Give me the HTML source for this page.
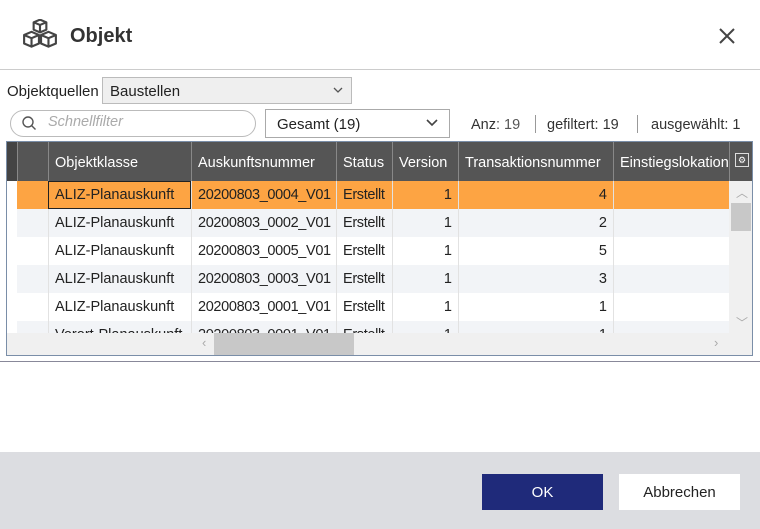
<!DOCTYPE html>
<html><head><meta charset="utf-8"><style>
*{box-sizing:border-box;margin:0;padding:0}
body{width:760px;height:529px;background:#fff;font-family:"Liberation Sans",sans-serif;color:#222;position:relative;overflow:hidden}
.a{position:absolute}
.t{font-size:14.5px;white-space:nowrap}
.hdr{position:absolute;top:0;height:39px;background:#555;color:#fff;font-size:14.5px;line-height:42px;padding-left:6px;border-left:1px solid #888;white-space:nowrap;overflow:hidden}
.cell{position:absolute;height:28px;line-height:29px;font-size:14.5px;padding:0 6px;border-left:1px solid #e2e2e2;white-space:nowrap;overflow:hidden}
.r{text-align:right}
.n{letter-spacing:-0.35px}
</style></head><body>
<svg class="a" style="left:22px;top:19px" width="36" height="32" viewBox="0 0 34 30" fill="none" stroke="#444" stroke-width="2" stroke-linejoin="round">
<path d="M11 3l6-2.5 6 2.5v7l-6 2.5-6-2.5z M11 3l6 2.5 6-2.5 M17 5.5v7"/>
<path d="M2 15l7-3 7 3v8l-7 3-7-3z M2 15l7 3 7-3 M9 18v8"/>
<path d="M18 15l7-3 7 3v8l-7 3-7-3z M18 15l7 3 7-3 M25 18v8"/>
</svg>
<div class="a" style="left:70px;top:25px;font-size:20px;font-weight:bold;color:#333">Objekt</div>
<svg class="a" style="left:718px;top:27px" width="18" height="18" viewBox="0 0 18 18" stroke="#444" stroke-width="2"><path d="M2 2L16 16M16 2L2 16"/></svg>
<div class="a" style="left:0;top:69px;width:760px;height:1px;background:#ccc"></div>

<div class="a t" style="left:7px;top:83px;font-size:15px">Objektquellen</div>
<div class="a t" style="left:102px;top:77px;width:250px;height:27px;background:#efefef;border:1px solid #bbb;line-height:27px;padding-left:7px;font-size:15px">Baustellen</div>
<svg class="a" style="left:333px;top:87px" width="10" height="7"><path d="M1 1l4 4 4-4" stroke="#555" fill="none" stroke-width="1.3"/></svg>

<div class="a" style="left:10px;top:110px;width:246px;height:27px;border:1px solid #bbb;border-radius:14px"></div>
<svg class="a" style="left:21px;top:115px" width="16" height="16" fill="none" stroke="#555" stroke-width="1.4"><circle cx="7" cy="7" r="5"/><path d="M10.5 10.5l4 4"/></svg>
<div class="a t" style="left:48px;top:114px;color:#aaa;font-style:italic">Schnellfilter</div>
<div class="a t" style="left:265px;top:109px;width:185px;height:29px;border:1px solid #aaa;line-height:30px;padding-left:11px;font-size:15px">Gesamt (19)</div>
<svg class="a" style="left:426px;top:119px" width="12" height="8"><path d="M1 1l5 5 5-5" stroke="#444" fill="none" stroke-width="1.6"/></svg>
<div class="a t" style="left:471px;top:117px;color:#333">Anz<span style="color:#555">: 19</span></div>
<div class="a" style="left:535px;top:115px;width:1px;height:18px;background:#999"></div>
<div class="a t" style="left:547px;top:117px;color:#333">gefiltert: 19</div>
<div class="a" style="left:637px;top:115px;width:1px;height:18px;background:#999"></div>
<div class="a t" style="left:651px;top:117px;color:#333">ausgewählt: 1</div>

<div class="a" style="left:6px;top:141px;width:747px;height:215px;border:1px solid #7a8ea8;background:#fff"></div>
<div class="a" style="left:7px;top:142px;width:745px;height:213px;overflow:hidden">
<div class="hdr" style="left:0;width:10px;background:#444;border-left:none"></div>
<div class="hdr" style="left:10px;width:31px"></div>
<div class="hdr" style="left:41px;width:143px">Objektklasse</div>
<div class="hdr" style="left:184px;width:145px">Auskunftsnummer</div>
<div class="hdr" style="left:329px;width:56px">Status</div>
<div class="hdr" style="left:385px;width:66px">Version</div>
<div class="hdr" style="left:451px;width:155px">Transaktionsnummer</div>
<div class="hdr" style="left:606px;width:116px">Einstiegslokation</div>
<div class="hdr" style="left:722px;width:23px;padding:0"><div style="position:absolute;left:5px;top:11px;width:14px;height:14px;border:1px solid #ddd;font-size:9px;line-height:12px;text-align:center">⚙</div></div>
<div id="rows"></div>
</div>
<script>
var d=[["ALIZ-Planauskunft","20200803_0004_V01","4"],["ALIZ-Planauskunft","20200803_0002_V01","2"],["ALIZ-Planauskunft","20200803_0005_V01","5"],["ALIZ-Planauskunft","20200803_0003_V01","3"],["ALIZ-Planauskunft","20200803_0001_V01","1"],["Vorort-Planauskunft","20200803_0001_V01","1"]];
var h="";
d.forEach(function(r,i){var y=39+i*28;var bg=i==0?"#fda443":(i%2?"#f2f4f7":"#fff");
h+='<div class="a" style="left:10px;top:'+y+'px;width:712px;height:28px;background:'+bg+'"></div>';
h+='<div class="cell" style="left:10px;top:'+y+'px;width:31px;border-left:none"></div>';
h+='<div class="cell" style="left:41px;top:'+y+'px;width:143px;'+(i==0?'border:1px solid #222;line-height:27px':'')+'">'+r[0]+'</div>';
h+='<div class="cell n" style="left:184px;top:'+y+'px;width:145px">'+r[1]+'</div>';
h+='<div class="cell n" style="left:329px;top:'+y+'px;width:56px">Erstellt</div>';
h+='<div class="cell r" style="left:385px;top:'+y+'px;width:66px">1</div>';
h+='<div class="cell r" style="left:451px;top:'+y+'px;width:155px">'+r[2]+'</div>';
h+='<div class="cell" style="left:606px;top:'+y+'px;width:116px"></div>';});
h+='<div class="a" style="left:0;top:191px;width:745px;height:22px;background:#f0f0f0"></div>';
h+='<div class="a" style="left:207px;top:191px;width:140px;height:22px;background:#c8c8c8"></div>';
h+='<div class="a" style="left:195px;top:193px;color:#aaa;font-size:13px">‹</div><div class="a" style="left:707px;top:193px;color:#aaa;font-size:13px">›</div>';
h+='<div class="a" style="left:722px;top:39px;width:23px;height:152px;background:#f0f0f0"></div>';
h+='<div class="a" style="left:724px;top:61px;width:20px;height:28px;background:#c8c8c8"></div>';
h+='<div class="a" style="left:729px;top:42px;color:#aaa;font-size:12px">︿</div><div class="a" style="left:729px;top:172px;color:#aaa;font-size:12px">﹀</div>';
document.getElementById("rows").innerHTML=h;
</script>
<div class="a" style="left:0;top:361px;width:760px;height:1px;background:#889"></div>
<div class="a" style="left:0;top:452px;width:760px;height:77px;background:#dcdde1"></div>
<div class="a" style="left:482px;top:474px;width:121px;height:36px;background:#1f2a7a;color:#fff;font-size:15px;line-height:37px;text-align:center">OK</div>
<div class="a" style="left:619px;top:474px;width:121px;height:36px;background:#fff;color:#222;font-size:15px;line-height:37px;text-align:center">Abbrechen</div>
</body></html>
